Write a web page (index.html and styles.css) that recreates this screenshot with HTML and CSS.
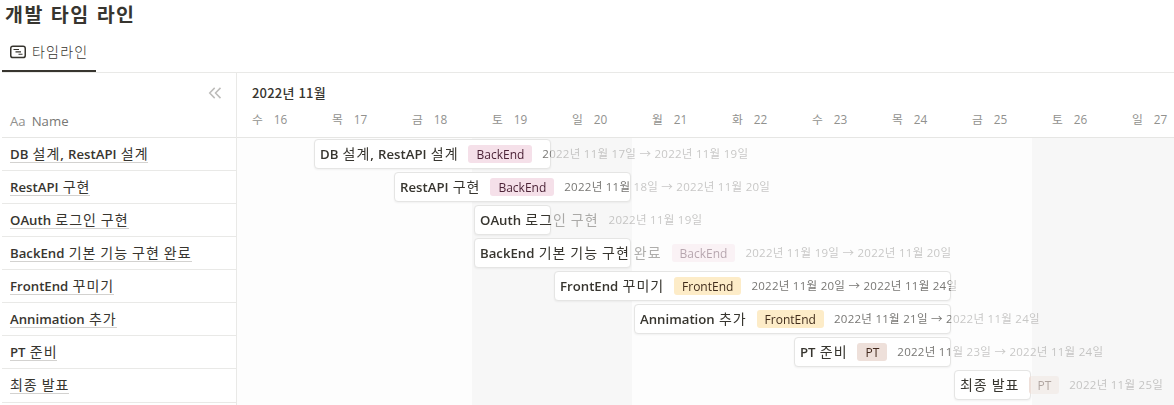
FILE: index.html
```html
<!DOCTYPE html>
<html lang="ko">
<head>
<meta charset="utf-8">
<title>개발 타임 라인</title>
<link rel="stylesheet" href="styles.css">
</head>
<body>
<h1 class="title">개발 타임 라인</h1>
<nav class="tabs">
  <div class="tab">
    <svg class="tab-icon" width="16" height="14" viewBox="0 0 16 14" fill="none" stroke="#37352f"><rect x=".75" y="1.2" width="14.5" height="11.4" rx="2.2" stroke-width="1.5"/><path d="M3.5 4.5H9M5.5 6.9H11M8.5 9.2H12.5" stroke-width="1.1"/></svg>
    <span class="tab-label">타임라인</span>
  </div>
</nav>
<main class="board">
  <section class="side">
    <div class="side-head">
      <svg class="collapse" width="14" height="12" viewBox="0 0 14 12" fill="none" stroke="#bdbcba" stroke-width="1.5"><path d="M6.7 .9 1.7 6l5 5.1M12.5 .9 7.5 6l5 5.1"/></svg>
      <div class="prop"><span class="aa">Aa</span><span>Name</span></div>
    </div>
    <div class="cell"><span class="page">DB <span class="ko">설계</span>, RestAPI <span class="ko">설계</span></span></div>
    <div class="cell"><span class="page">RestAPI <span class="ko">구현</span></span></div>
    <div class="cell"><span class="page">OAuth <span class="ko">로그인 구현</span></span></div>
    <div class="cell"><span class="page">BackEnd <span class="ko">기본 기능 구현 완료</span></span></div>
    <div class="cell"><span class="page">FrontEnd <span class="ko">꾸미기</span></span></div>
    <div class="cell"><span class="page">Annimation <span class="ko">추가</span></span></div>
    <div class="cell"><span class="page">PT <span class="ko">준비</span></span></div>
    <div class="cell last"><span class="page"><span class="ko">최종 발표</span></span></div>
  </section>
  <section class="timeline">
    <header class="time-head">
      <div class="month">2022년 11월</div>
      <div class="days">
        <div class="day"><span>수</span><span>16</span></div>
        <div class="day"><span>목</span><span>17</span></div>
        <div class="day"><span>금</span><span>18</span></div>
        <div class="day"><span>토</span><span>19</span></div>
        <div class="day"><span>일</span><span>20</span></div>
        <div class="day"><span>월</span><span>21</span></div>
        <div class="day"><span>화</span><span>22</span></div>
        <div class="day"><span>수</span><span>23</span></div>
        <div class="day"><span>목</span><span>24</span></div>
        <div class="day"><span>금</span><span>25</span></div>
        <div class="day"><span>토</span><span>26</span></div>
        <div class="day"><span>일</span><span>27</span></div>
      </div>
    </header>
    <div class="grid">
      <div class="row"><div class="bar" style="--start:1;--span:3"><div class="info"><span class="name">DB <span class="ko">설계</span>, RestAPI <span class="ko">설계</span></span><span class="tag pink">BackEnd</span><span class="date">2022년 11월 17일 → 2022년 11월 19일</span></div></div></div>
      <div class="row"><div class="bar" style="--start:2;--span:3"><div class="info"><span class="name">RestAPI <span class="ko">구현</span></span><span class="tag pink">BackEnd</span><span class="date">2022년 11월 18일 → 2022년 11월 20일</span></div></div></div>
      <div class="row"><div class="bar" style="--start:3;--span:1"><div class="info"><span class="name">OAuth <span class="ko">로그인 구현</span></span><span class="date">2022년 11월 19일</span></div></div></div>
      <div class="row"><div class="bar" style="--start:3;--span:2"><div class="info"><span class="name">BackEnd <span class="ko">기본 기능 구현 완료</span></span><span class="tag pink">BackEnd</span><span class="date">2022년 11월 19일 → 2022년 11월 20일</span></div></div></div>
      <div class="row"><div class="bar" style="--start:4;--span:5"><div class="info"><span class="name">FrontEnd <span class="ko">꾸미기</span></span><span class="tag yellow">FrontEnd</span><span class="date">2022년 11월 20일 → 2022년 11월 24일</span></div></div></div>
      <div class="row"><div class="bar" style="--start:5;--span:4"><div class="info"><span class="name">Annimation <span class="ko">추가</span></span><span class="tag yellow">FrontEnd</span><span class="date">2022년 11월 21일 → 2022년 11월 24일</span></div></div></div>
      <div class="row"><div class="bar" style="--start:7;--span:2"><div class="info"><span class="name">PT <span class="ko">준비</span></span><span class="tag brown">PT</span><span class="date">2022년 11월 23일 → 2022년 11월 24일</span></div></div></div>
      <div class="row"><div class="bar" style="--start:9;--span:1"><div class="info"><span class="name"><span class="ko">최종 발표</span></span><span class="tag brown">PT</span><span class="date">2022년 11월 25일</span></div></div></div>
    </div>
  </section>
</main>
</body>
</html>
```
FILE: styles.css
```css
* { box-sizing: border-box; }
body {
  margin: 0;
  height: 405px;
  overflow: hidden;
  background: #fff;
  color: #37352f;
  font-family: "Open Sans", "Noto Sans CJK KR", sans-serif;
  font-size: 13.2px;
  white-space: nowrap;
}
.title {
  margin: 0;
  height: 32px;
  padding-left: 5px;
  font: 700 19.5px/27px "Noto Sans CJK KR", sans-serif;
  letter-spacing: 1.5px;
}
.tabs {
  display: flex;
  height: 41px;
  margin-left: 2px;
  border-bottom: 1px solid #e9e9e7;
}
.tab {
  display: flex;
  align-items: center;
  gap: 6px;
  width: 94px;
  height: 40px;
  padding-left: 8px;
  border-bottom: 2px solid #37352f;
}
.tab-icon { margin-top: 2px; }
.tab-label {
  font: 300 14px/20px "Noto Sans CJK KR", sans-serif;
  letter-spacing: 1.2px;
}
.board { display: flex; height: 332px; }
.side {
  width: 235px;
  margin-left: 2px;
  flex: none;
  border-right: 1px solid #e9e9e7;
}
.side-head {
  display: flex;
  flex-direction: column;
  justify-content: space-between;
  height: 65px;
  padding: 14px 14px 5px 8px;
  border-bottom: 1px solid #e6e6e4;
}
.collapse { align-self: flex-end; }
.prop { display: flex; gap: 6px; line-height: 22px; color: #787774; }
.aa { color: #91918e; }
.cell {
  display: flex;
  align-items: flex-start;
  height: 33px;
  padding: 6px 8px 0;
  border-bottom: 1px solid #e9e9e7;
}
.cell.last { height: 34px; }
.page, .name { font-weight: 600; line-height: 20px; word-spacing: .8px; }
.page {
  height: 19px;
  border-bottom: 1px solid #d3d2d0;
}
.ko {
  font-size: 14px;
  font-weight: 400;
  line-height: 1;
  letter-spacing: .95px;
  word-spacing: -.5px;
}
.timeline { flex: none; width: 937px; overflow: hidden; }
.time-head { height: 65px; border-bottom: 1px solid #e6e6e4; }
.month {
  height: 36px;
  padding: 9px 0 0 15px;
  font: 500 13px/21px "Noto Sans CJK KR", sans-serif;
  letter-spacing: .2px;
}
.days { display: flex; padding-left: 15px; }
.day {
  display: flex;
  gap: 11px;
  flex: none;
  width: 80px;
  line-height: 21px;
  font-size: 11.8px;
  color: #91918e;
}
.grid {
  height: 267px;
  background:
    linear-gradient(#f7f7f7, #f7f7f7) 235px 0 / 160px 100% no-repeat,
    linear-gradient(#f7f7f7, #f7f7f7) 795px 0 / 160px 100% no-repeat,
    #fdfdfd;
}
.row { display: flex; height: 33px; padding-top: 1px; }
.bar {
  flex: none;
  width: calc(var(--span) * 80px - 3px);
  height: 30px;
  margin-left: calc(var(--start) * 80px - 3px);
  border: 1px solid #e5e5e4;
  border-radius: 4px;
  background: #fff;
  box-shadow: 0 1px 2px #0000000d;
}
/* Text past the end of the bar is faded */
.info {
  display: flex;
  align-items: center;
  width: max-content;
  height: 28px;
  padding-left: 5px;
  mask-image: linear-gradient(90deg, #000 calc(var(--span) * 80px - 4px), #0006 calc(var(--span) * 80px - 4px));
}
.name { padding-bottom: 1px; }
.tag {
  height: 18px;
  margin-left: 10px;
  padding: 0 8px;
  border-radius: 3px;
  font-size: 12px;
  line-height: 19px;
}
.pink { background: #f5e0e9; color: #4c2337; }
.yellow { background: #fdecc8; color: #402c1b; }
.brown { background: #eee0da; color: #442a1e; }
.date {
  margin-left: 10px;
  padding-bottom: 2px;
  font-family: "Open Sans", "Noto Sans CJK KR", sans-serif;
  font-size: 11.5px;
  letter-spacing: .27px;
  color: #787774;
}
```
